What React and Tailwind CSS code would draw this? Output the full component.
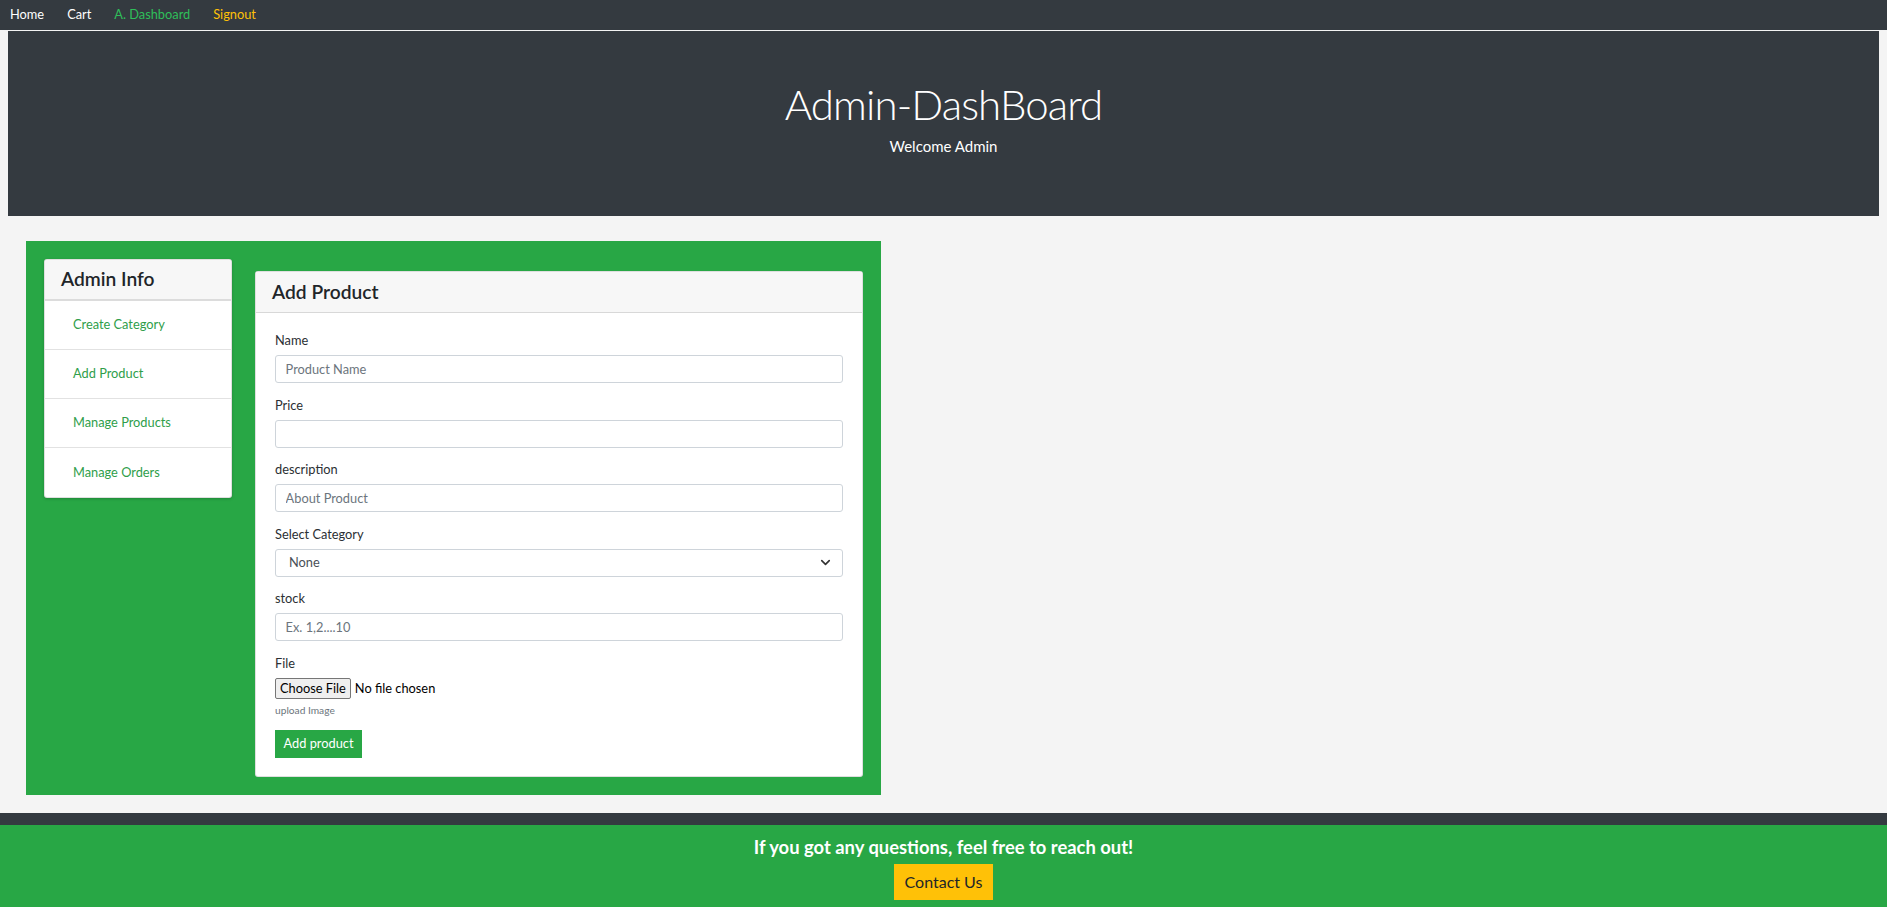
import React from 'react';
import { ChevronDown } from 'lucide-react';

const NAV = [
  { label: 'Home', cls: 'text-white' },
  { label: 'Cart', cls: 'text-white' },
  { label: 'A. Dashboard', cls: 'text-[#2fbf5a]' },
  { label: 'Signout', cls: 'text-[#ffc107]' },
];

const SIDE = ['Create Category', 'Add Product', 'Manage Products', 'Manage Orders'];

const inputCls =
  'block w-full h-[28px] border border-[#ced4da] rounded-[3px] px-[9.6px] text-[12.8px] text-[#495057] placeholder:text-[#6c757d] outline-none bg-white';

function Field({ label, children }) {
  return (
    <div className="mb-[12.5px]">
      <label className="block h-[19px] leading-[19px] mb-[5px] text-[12.8px] text-[#2b2f33]">{label}</label>
      {children}
    </div>
  );
}

export default function App() {
  return (
    <div className="min-h-screen bg-[#f4f4f4] font-[Lato,sans-serif] text-[12.8px] text-[#212529]">
      <nav className="h-[30px] bg-[#343a40] flex items-center pl-[10px] gap-[23px]">
        {NAV.map((n) => (
          <a key={n.label} href="#" className={`text-[12.8px] ${n.cls}`}>{n.label}</a>
        ))}
      </nav>

      <header className="mx-[8px] mt-[1px] h-[185px] bg-[#343a40] flex flex-col items-center pt-[48px] text-white">
        <h1 className="text-[42px] font-light leading-[1.2] tracking-[-0.9px]">Admin-DashBoard</h1>
        <p className="text-[15px] leading-[24px] mt-[5px] text-white">Welcome Admin</p>
      </header>

      <main className="pl-[26px] pt-[25px] pb-[18px]">
        <div className="w-[855px] bg-[#28a745] p-[18px] flex items-start gap-[23px]">
          {/* sidebar */}
          <aside className="w-[188px] bg-white border border-[rgba(0,0,0,0.125)] rounded-[3px] shadow-[0_1px_3px_rgba(0,0,0,0.2)] overflow-hidden">
            <div className="h-[41px] bg-[#f7f7f7] border-b-2 border-[#dcdcdc] px-[16px] flex items-center">
              <h3 className="text-[19.2px] font-semibold text-[#212529]">Admin Info</h3>
            </div>
            {SIDE.map((s, i) => (
              <div key={s} className={`h-[49px] pl-[28px] flex items-center ${i < SIDE.length - 1 ? 'border-b border-[#e2e2e2]' : ''}`}>
                <a href="#" className="text-[12.8px] text-[#2f9e4a]">{s}</a>
              </div>
            ))}
          </aside>

          {/* add product */}
          <section className="w-[608px] mt-[12px] bg-white border border-[rgba(0,0,0,0.125)] rounded-[3px]">
            <div className="h-[41px] bg-[#f7f7f7] border-b border-[rgba(0,0,0,0.125)] px-[16px] flex items-center">
              <h4 className="text-[19.2px] font-semibold text-[#212529]">Add Product</h4>
            </div>
            <form className="px-[19px] pt-[18px] pb-[18px]">
              <Field label="Name">
                <input className={inputCls} placeholder="Product Name" />
              </Field>
              <Field label="Price">
                <input className={inputCls} />
              </Field>
              <Field label="description">
                <input className={inputCls} placeholder="About Product" />
              </Field>
              <Field label="Select Category">
                <div className="h-[28px] border border-[#ced4da] rounded-[3px] pl-[13px] pr-[9px] flex items-center justify-between bg-white">
                  <span className="text-[12.8px] text-[#495057]">None</span>
                  <ChevronDown size={15} strokeWidth={2.6} className="text-[#333]" />
                </div>
              </Field>
              <Field label="stock">
                <input className={inputCls} placeholder="Ex. 1,2....10" />
              </Field>

              <label className="block h-[19px] leading-[19px] mb-[5px] text-[12.8px] text-[#2b2f33]">File</label>
              <div className="flex items-center h-[22px]">
                <span className="h-[21px] px-[4px] flex items-center border border-[#767676] rounded-[2px] bg-[#efefef] text-[12.8px] text-black">Choose File</span>
                <span className="ml-[4px] text-[12.8px] text-black">No file chosen</span>
              </div>
              <small className="block mt-[3px] leading-[15px] text-[10.2px] text-[#6c757d]">upload Image</small>

              <button type="button" className="mt-[12px] h-[28px] w-[87px] bg-[#28a745] text-white text-[12.8px]">Add product</button>
            </form>
          </section>
        </div>
      </main>

      <footer className="bg-[#343a40] pt-[12px]">
        <div className="bg-[#28a745] pt-[12px] pb-[12px] flex flex-col items-center">
          <h5 className="text-white text-[18.4px] font-bold leading-[21px]">If you got any questions, feel free to reach out!</h5>
          <button type="button" className="mt-[6px] w-[99px] h-[36px] bg-[#ffc107] text-[16px] text-[#212529]">Contact Us</button>
        </div>
      </footer>
    </div>
  );
}
